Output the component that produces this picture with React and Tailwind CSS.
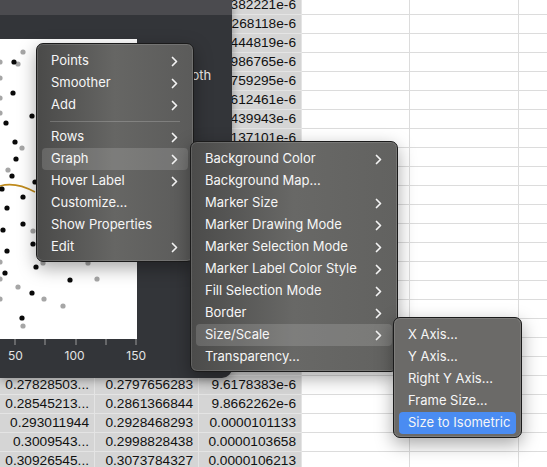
import React from 'react';

// spreadsheet rows, top row starts at y = -4, 19px each
const sheetRows = [
  ['0.02612844...', '0.0261003315', '7.6382221e-6'],
  ['0.03405127...', '0.0340291735', '7.8268118e-6'],
  ['0.04221903...', '0.0421834481', '7.9444819e-6'],
  ['0.05077415...', '0.0507291122', '8.0986765e-6'],
  ['0.05963308...', '0.0595998147', '8.2759295e-6'],
  ['0.06880126...', '0.0687511925', '8.4612461e-6'],
  ['0.07826113...', '0.0782044672', '8.6439943e-6'],
  ['0.08799241...', '0.0879306381', '8.8137101e-6'],
  ['0.09801132...', '0.0979317756', '8.9821133e-6'],
  ['0.10829563...', '0.1082220901', '9.0563711e-6'],
  ['0.11882612...', '0.1187424112', '9.1277025e-6'],
  ['0.12960137...', '0.1295188375', '9.1894407e-6'],
  ['0.14061921...', '0.1405314486', '9.2436619e-6'],
  ['0.15187703...', '0.1517990522', '9.2926613e-6'],
  ['0.16337102...', '0.1632815537', '9.3397204e-6'],
  ['0.17509867...', '0.1750018803', '9.3866255e-6'],
  ['0.18705631...', '0.1869671148', '9.4327728e-6'],
  ['0.19924140...', '0.1991518442', '9.4782291e-6'],
  ['0.21164952...', '0.2115536218', '9.5227718e-6'],
  ['0.22427699...', '0.2241833015', '9.5663190e-6'],
  ['0.27828503...', '0.2797656283', '9.6178383e-6'],
  ['0.28545213...', '0.2861366844', '9.8662262e-6'],
  ['0.293011944', '0.2928468293', '0.0000101133'],
  ['0.3009543...', '0.2998828438', '0.0000103658'],
  ['0.30926545...', '0.3073784327', '0.0000106213'],
];

const colWidths = ['w-[104px]', 'w-[104px]', 'w-[103px]', 'w-[108px]', 'w-[109px]', 'w-[100px]'];

const blackDots = [
  [14, 62], [13, 93], [32, 116], [6, 123], [15, 142], [16, 159], [12, 176],
  [35, 182], [2, 189], [23, 197], [7, 208], [23, 224], [3, 230], [33, 244],
  [7, 251], [36, 267], [5, 273], [70, 280], [32, 293], [22, 318],
];

const grayDots = [
  [23, 52], [18, 64], [0, 62], [0, 78], [0, 98], [0, 113], [22, 148], [8, 170],
  [33, 231], [0, 262], [0, 279], [43, 263], [88, 263], [97, 279], [18, 287],
  [0, 299], [44, 299], [63, 306], [23, 326],
];

const mainMenu = [
  { label: 'Points', sub: true },
  { label: 'Smoother', sub: true },
  { label: 'Add', sub: true },
  { sep: true },
  { label: 'Rows', sub: true },
  { label: 'Graph', sub: true, active: true },
  { label: 'Hover Label', sub: true },
  { label: 'Customize...' },
  { label: 'Show Properties' },
  { label: 'Edit', sub: true },
];

const graphMenu = [
  { label: 'Background Color', sub: true },
  { label: 'Background Map...' },
  { label: 'Marker Size', sub: true },
  { label: 'Marker Drawing Mode', sub: true },
  { label: 'Marker Selection Mode', sub: true },
  { label: 'Marker Label Color Style', sub: true },
  { label: 'Fill Selection Mode', sub: true },
  { label: 'Border', sub: true },
  { label: 'Size/Scale', sub: true, active: true },
  { label: 'Transparency...' },
];

const scaleMenu = [
  { label: 'X Axis...' },
  { label: 'Y Axis...' },
  { label: 'Right Y Axis...' },
  { label: 'Frame Size...' },
  { label: 'Size to Isometric', selected: true },
];

const Chevron = () => (
  <svg width="7" height="11" viewBox="0 0 7 11" className="shrink-0">
    <path d="M1.5 1.5 L5.5 5.5 L1.5 9.5" fill="none" stroke="#f4f4f4" strokeWidth="1.7" strokeLinecap="round" strokeLinejoin="round" />
  </svg>
);

const Menu = ({ items, className }) => (
  <div
    className={`absolute rounded-[7px] border border-[#1b1b1b] pt-[6px] pb-[3px] font-['Inter',sans-serif] text-[13px] text-[#f6f6f6] shadow-[0_6px_18px_rgba(0,0,0,0.35),inset_0_0_0_1px_rgba(255,255,255,0.13)] ${className}`}
  >
    {items.map((item, i) =>
      item.sep ? (
        <div key={i} className="flex h-[10px] items-center px-[13px]">
          <div className="h-px w-full bg-white/20" />
        </div>
      ) : (
        <div
          key={i}
          className={`mx-[5px] flex h-[22px] items-center justify-between rounded-[4px] pl-[9px] pr-[10px] ${
            item.active ? 'bg-white/15' : ''
          } ${item.selected ? 'bg-[#4a8cf2]' : ''}`}
        >
          <span className="whitespace-nowrap">{item.label}</span>
          {item.sub && <Chevron />}
        </div>
      )
    )}
  </div>
);

const Sheet = () => (
  <div className="-ml-[9px] -mt-[4px] flex flex-col font-['Liberation_Sans',Arial,sans-serif] text-[13.7px] text-[#111]">
    {sheetRows.map((row, r) => (
      <div key={r} className="flex h-[19px]">
        {colWidths.map((w, c) => (
          <div
            key={c}
            className={`${w} shrink-0 overflow-hidden border-b border-r pr-[5px] text-right leading-[18px] whitespace-nowrap ${
              c < 3 ? 'border-[#e4e4e4] bg-[#d5d5d5]' : 'border-[#dcdcdc] bg-white'
            }`}
          >
            {c < 3 ? row[c] : ''}
          </div>
        ))}
      </div>
    ))}
  </div>
);

const Plot = () => (
  <div className="relative h-[300px] w-[137px] bg-white">
    <svg width="137" height="300" viewBox="0 0 137 300" className="absolute left-0 top-0">
      <path d="M0 147 C 10 144, 22 146, 35 153" fill="none" stroke="#c08b1c" strokeWidth="1.6" />
      {grayDots.map(([x, y], i) => (
        <circle key={`g${i}`} cx={x} cy={y - 39} r="2.6" fill="#a6a6a6" />
      ))}
      {blackDots.map(([x, y], i) => (
        <circle key={`b${i}`} cx={x} cy={y - 39} r="2.6" fill="#0a0a0a" />
      ))}
    </svg>
  </div>
);

const GraphWindow = () => (
  <div className="absolute left-0 top-0 flex h-[378px] w-[232px] flex-col overflow-hidden rounded-br-[10px] bg-[#333539] shadow-[0_2px_10px_rgba(0,0,0,0.35)]">
    <div className="h-[15px] bg-[#4b4b4f]" />
    <div className="relative flex-1 pt-[24px]">
      <div className="flex items-start">
        <Plot />
        <span className="ml-[27px] mt-[27px] font-['Inter',sans-serif] text-[13px] text-[#e8e8e8]">Smooth</span>
      </div>
      <svg width="140" height="8" className="block">
        {[15, 45, 76, 106, 136].map((x) => (
          <line key={x} x1={x} y1="0" x2={x} y2="6" stroke="#9a9a9a" strokeWidth="1" />
        ))}
      </svg>
      <div className="flex w-[160px] justify-between pl-[8px] pr-[14px] font-['Inter',sans-serif] text-[12px] text-[#e4e4e4]">
        <span>50</span>
        <span>100</span>
        <span>150</span>
      </div>
    </div>
  </div>
);

export default function App() {
  return (
    <div className="relative h-[467px] w-[547px] overflow-hidden bg-white">
      <Sheet />
      <GraphWindow />
      <Menu
        items={mainMenu}
        className="left-[36px] top-[43px] w-[158px] bg-gradient-to-r from-[#4a4a49] via-[#666664] to-[#5b5b5a]"
      />
      <Menu
        items={graphMenu}
        className="left-[190px] top-[141px] w-[208px] bg-gradient-to-r from-[#4b4b4a] via-[#686866] to-[#626260]"
      />
      <Menu
        items={scaleMenu}
        className="left-[393px] top-[317px] w-[129px] bg-[#6b6a68]"
      />
    </div>
  );
}
